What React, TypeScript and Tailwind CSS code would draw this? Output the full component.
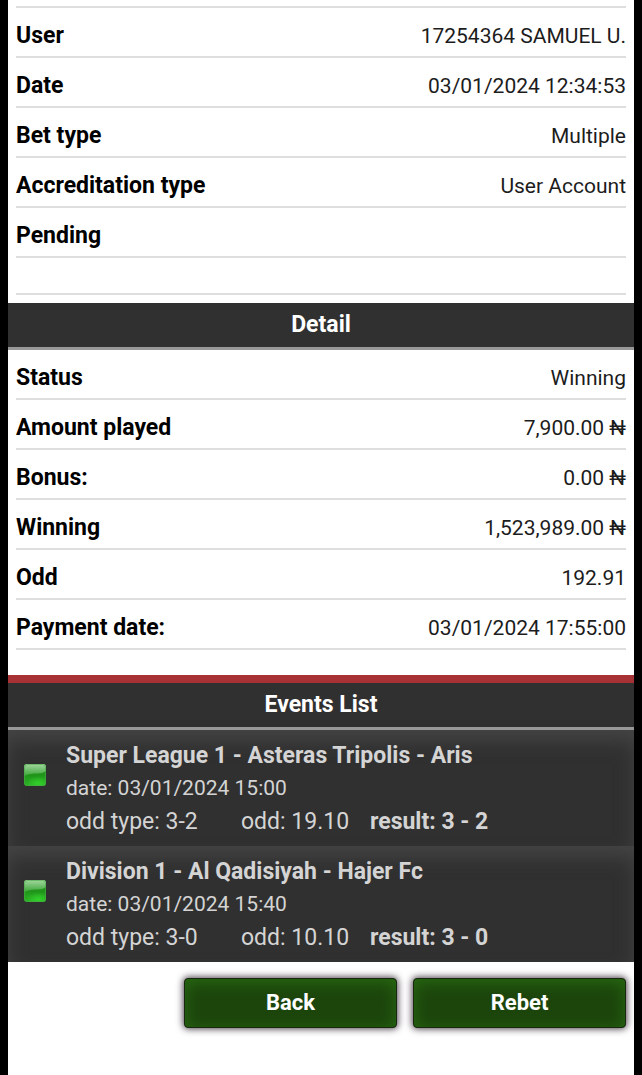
import React from "react";

type Entry = { label: string; value: string };

type BetEvent = {
  title: string;
  date: string;
  oddType: string;
  odd: string;
  result: string;
};

const summary: Entry[] = [
  { label: "User", value: "17254364 SAMUEL U." },
  { label: "Date", value: "03/01/2024 12:34:53" },
  { label: "Bet type", value: "Multiple" },
  { label: "Accreditation type", value: "User Account" },
  { label: "Pending", value: "" },
];

const detail: Entry[] = [
  { label: "Status", value: "Winning" },
  { label: "Amount played", value: "7,900.00 ₦" },
  { label: "Bonus:", value: "0.00 ₦" },
  { label: "Winning", value: "1,523,989.00 ₦" },
  { label: "Odd", value: "192.91" },
  { label: "Payment date:", value: "03/01/2024 17:55:00" },
];

const events: BetEvent[] = [
  {
    title: "Super League 1 - Asteras Tripolis - Aris",
    date: "03/01/2024 15:00",
    oddType: "3-2",
    odd: "19.10",
    result: "3 - 2",
  },
  {
    title: "Division 1 - Al Qadisiyah - Hajer Fc",
    date: "03/01/2024 15:40",
    oddType: "3-0",
    odd: "10.10",
    result: "3 - 0",
  },
];

function EntryList({ entries }: { entries: Entry[] }) {
  return (
    <dl className="mx-2">
      {entries.map((entry) => (
        <div
          key={entry.label}
          className="flex h-[50px] items-center justify-between border-b-2 border-[#dedede] pt-2"
        >
          <dt className="text-[23px] leading-7 font-bold text-black">{entry.label}</dt>
          <dd className="text-[21px] leading-7 text-[#1c1c1c]">{entry.value}</dd>
        </div>
      ))}
    </dl>
  );
}

function SectionTitle({ children }: { children: React.ReactNode }) {
  return (
    <h2 className="flex h-[47px] items-center justify-center border-b-3 border-[#989898] bg-[#303030] text-[23px] leading-7 font-bold text-white">
      {children}
    </h2>
  );
}

function WonIcon() {
  return (
    <svg viewBox="0 0 22 22" className="size-[22px] shrink-0" role="img" aria-label="Won">
      <defs>
        <linearGradient id="won-base" x1="0" y1="0" x2="0" y2="1">
          <stop offset="0" stopColor="#2f9a2b" />
          <stop offset="0.5" stopColor="#1f9419" />
          <stop offset="1" stopColor="#2db327" />
        </linearGradient>
        <linearGradient id="won-gloss" x1="0" y1="0" x2="0" y2="1">
          <stop offset="0" stopColor="#a3d6a0" />
          <stop offset="1" stopColor="#3ba636" />
        </linearGradient>
        <radialGradient id="won-glow" cx="0.65" cy="0.8" r="0.55">
          <stop offset="0" stopColor="#32d02a" />
          <stop offset="1" stopColor="#32d02a" stopOpacity="0" />
        </radialGradient>
      </defs>
      <rect width="22" height="22" rx="3" fill="url(#won-base)" />
      <path d="M0 12Q6 9 12 9.500T22 7V3Q22 0 19 0H3Q0 0 0 3Z" fill="url(#won-gloss)" />
      <rect y="9" width="22" height="13" rx="3" fill="url(#won-glow)" />
      <rect x="0.5" y="0.5" width="21" height="21" rx="3" fill="none" stroke="#4aa846" strokeOpacity="0.6" />
    </svg>
  );
}

function EventRow({ event }: { event: BetEvent }) {
  return (
    <li className="flex h-[116px] gap-5 bg-[#303030] pt-2 pl-4 text-[#d4d4d4] shadow-[inset_0_12px_20px_-2px_#454545]">
      <div className="pt-[26px]">
        <WonIcon />
      </div>
      <div>
        <h3 className="text-[23px] leading-9 font-bold">{event.title}</h3>
        <p className="text-[21px] leading-7">date: {event.date}</p>
        <p className="flex text-[23px] leading-10">
          <span className="w-[175px]">odd type: {event.oddType}</span>
          <span className="w-[129px]">odd: {event.odd}</span>
          <strong className="font-bold">result: {event.result}</strong>
        </p>
      </div>
    </li>
  );
}

function ActionButton({ children }: { children: React.ReactNode }) {
  return (
    <button
      type="button"
      className="h-[50px] flex-1 rounded border border-[#17290f] bg-[#1c450c] text-[22px] leading-7 font-bold text-white shadow-[0_0_7px_1px_#4a3f4a,inset_0_3px_16px_#286b12]"
    >
      {children}
    </button>
  );
}

export default function App() {
  return (
    <div className="min-h-screen bg-black px-2 font-[Roboto,sans-serif]">
      <main className="min-h-screen bg-white">
        <section>
          <div className="mx-2 h-2 border-b-2 border-[#dedede]" />
          <EntryList entries={summary} />
          <div className="mx-2 h-[37px] border-b-2 border-[#dedede]" />
        </section>
        <section className="pt-2">
          <SectionTitle>Detail</SectionTitle>
          <EntryList entries={detail} />
        </section>
        <section className="mt-[25px] border-t-8 border-[#a63236]">
          <SectionTitle>Events List</SectionTitle>
          <ul>
            {events.map((event) => (
              <EventRow key={event.title} event={event} />
            ))}
          </ul>
        </section>
        <div className="flex justify-end px-2 pt-4">
          <div className="flex w-[442px] max-w-full gap-4">
            <ActionButton>Back</ActionButton>
            <ActionButton>Rebet</ActionButton>
          </div>
        </div>
      </main>
    </div>
  );
}
